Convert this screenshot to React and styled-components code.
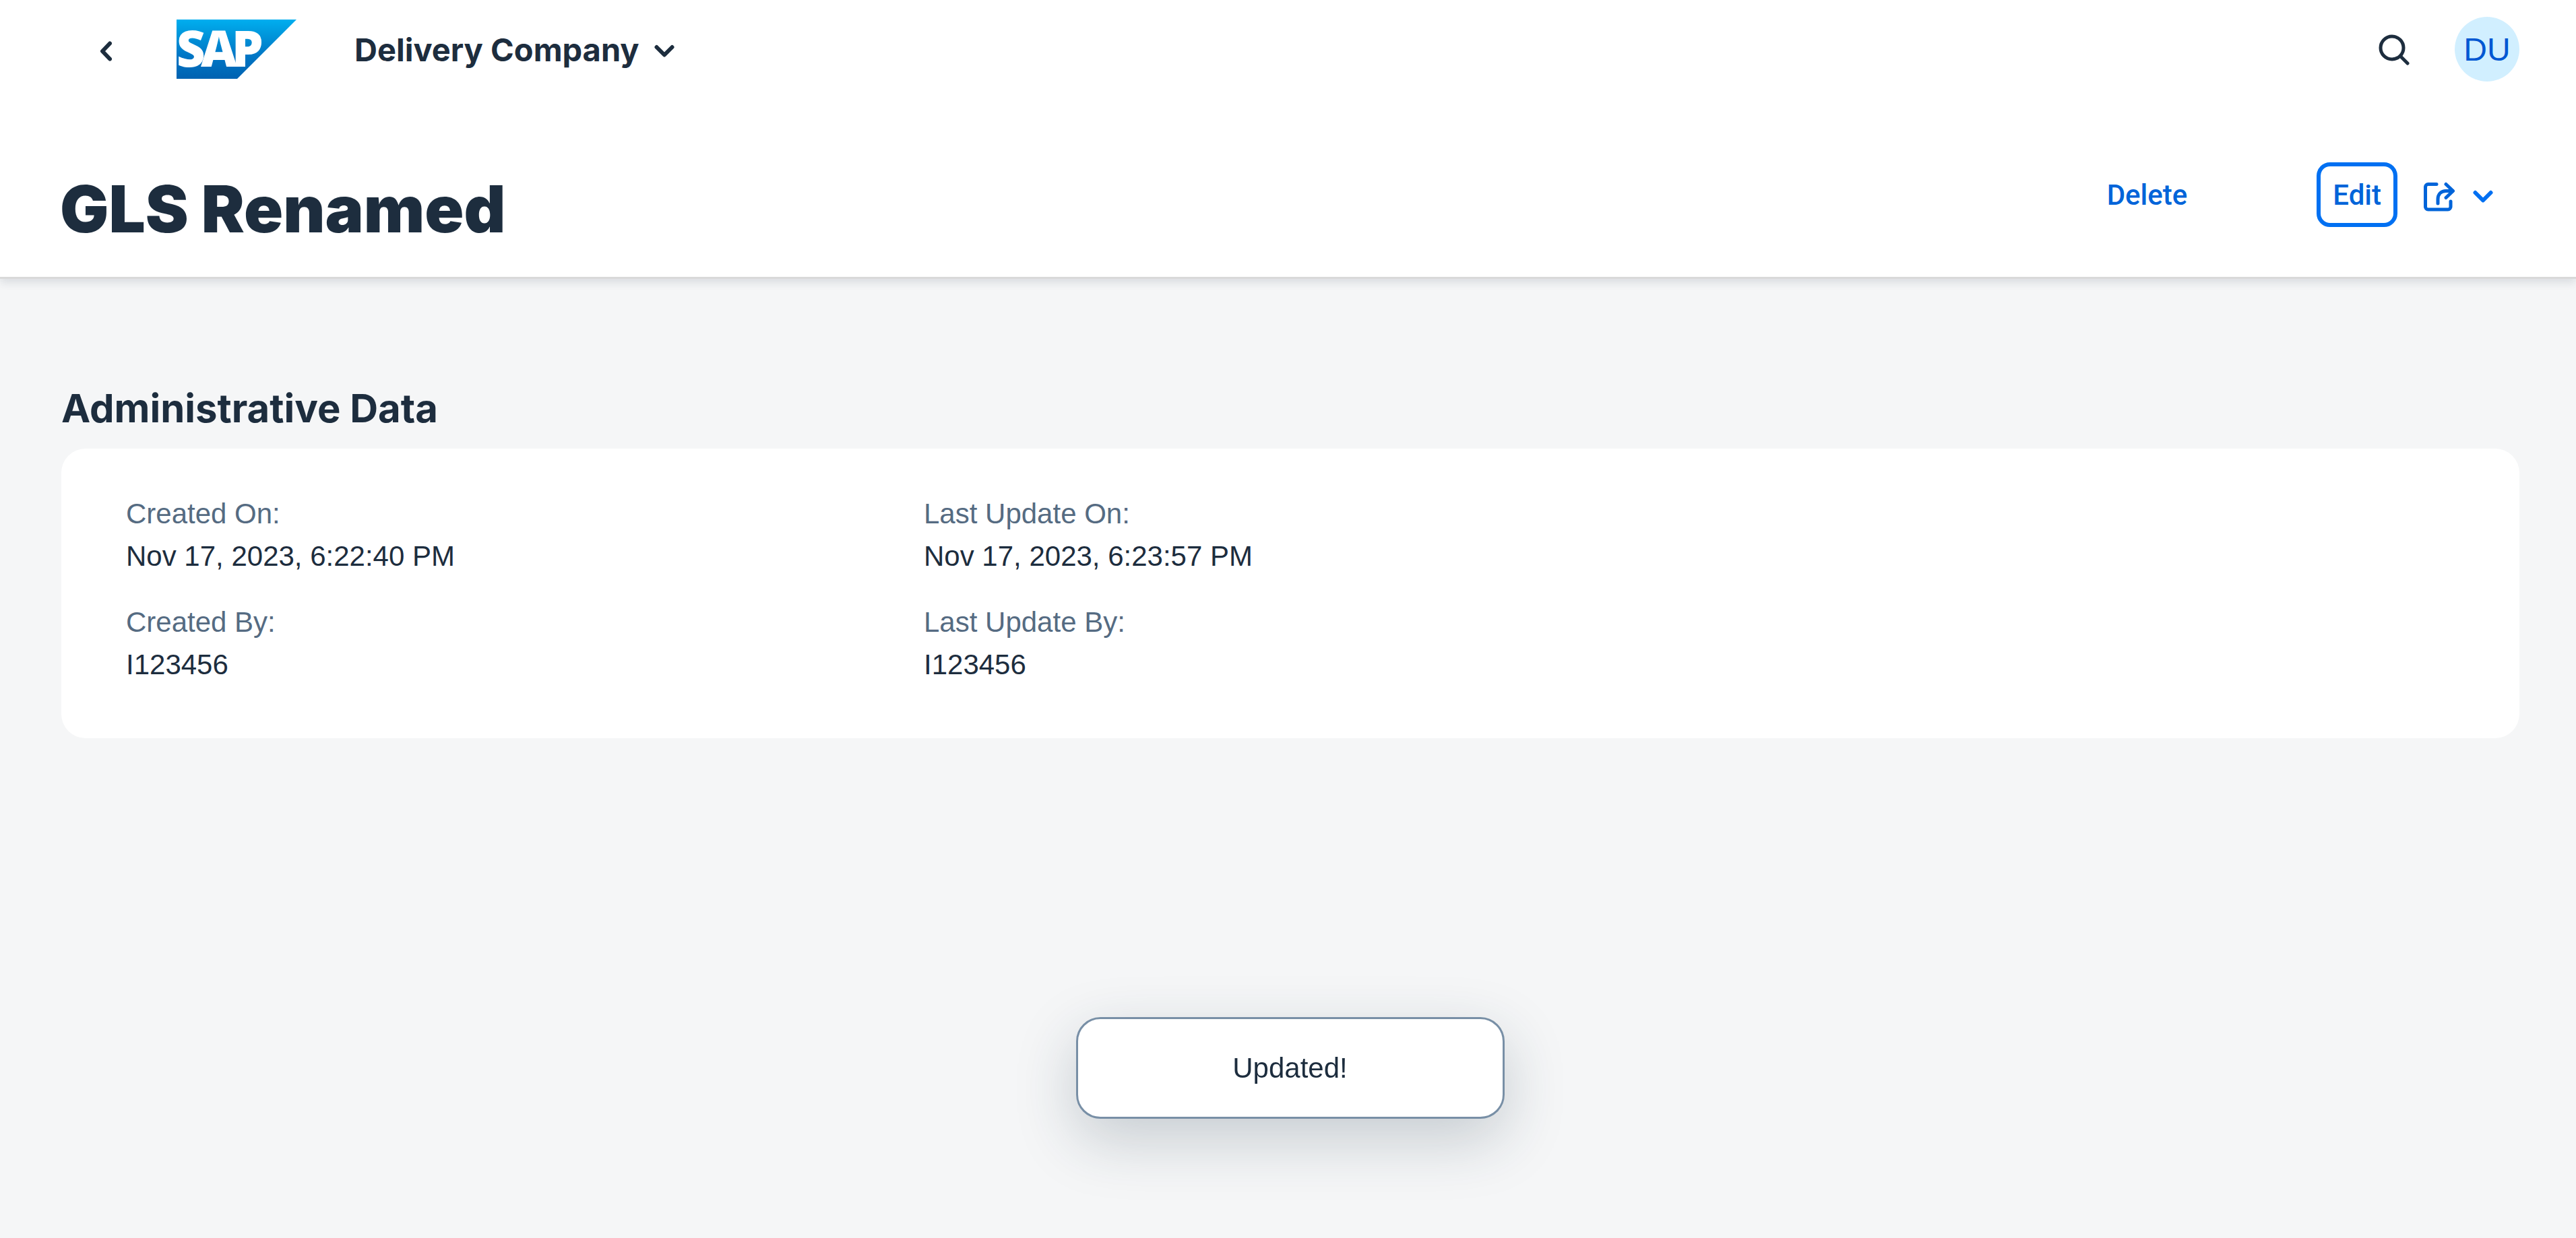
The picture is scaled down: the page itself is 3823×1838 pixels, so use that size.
import React from "react";
import styled, { createGlobalStyle } from "styled-components";

const ink = "#1d2d3e";
const link = "#0064d9";
const heading = `Inter, "Liberation Sans", sans-serif`;

const GlobalStyle = createGlobalStyle`
  * { box-sizing: border-box; }
  body {
    margin: 0;
    background: #f5f6f7;
    color: ${ink};
    font-family: "Liberation Sans", Arial, sans-serif;
    font-size: 42px;
    line-height: 63px;
  }
  h1, h2, dl, dd { margin: 0; }
`;

const Page = styled.div`
  min-height: 100vh;
`;

const ShellBar = styled.header`
  position: relative;
  z-index: 1;
  display: flex;
  align-items: center;
  height: 146px;
  padding: 0 84px 0 124px;
  background: #fff;
`;

const PlainButton = styled.button`
  display: flex;
  align-items: center;
  justify-content: center;
  padding: 0;
  border: 0;
  background: none;
  color: ${(p) => p.$color || ink};
  font: inherit;
  cursor: pointer;
  svg { display: block; }
`;

const BackButton = styled(PlainButton)`
  width: 66px;
  height: 96px;
`;

const HomeLink = styled.a`
  display: block;
  margin-left: 72px;
  svg { display: block; overflow: visible; }
`;

const AppTitle = styled(PlainButton)`
  gap: 22px;
  margin-left: 86px;
  font-family: ${heading};
  font-size: 47px;
  font-weight: 700;
`;

const ShellTools = styled.div`
  display: flex;
  align-items: center;
  gap: 42px;
  margin-left: auto;
`;

const SearchButton = styled(PlainButton)`
  width: 96px;
  height: 96px;
`;

const Avatar = styled(PlainButton)`
  width: 96px;
  height: 96px;
  border-radius: 50%;
  background: #d1efff;
  color: #0057d2;
  font-size: 48px;
`;

const ObjectHeader = styled.section`
  display: flex;
  align-items: flex-start;
  justify-content: space-between;
  padding: 95px 84px 32px 89px;
  border-bottom: 3px solid #d9d9d9;
  background: #fff;
  box-shadow: 0 6px 12px rgba(34, 53, 72, 0.12);
`;

const Title = styled.h1`
  font-family: ${heading};
  font-size: 96px;
  font-weight: 900;
  line-height: 138px;
`;

const Actions = styled.div`
  display: flex;
  align-items: center;
  gap: 24px;
`;

const ActionButton = styled(PlainButton)`
  height: 96px;
  padding: 0 18px;
  border: 6px solid ${(p) => (p.$focused ? "#0070f2" : "transparent")};
  border-radius: 20px;
  color: ${link};
  font-family: Roboto, "Liberation Sans", sans-serif;
  font-weight: 500;
  margin-right: ${(p) => (p.$spaced ? "144px" : "0")};
`;

const ShareButton = styled(PlainButton)`
  gap: 26px;
  height: 96px;
  padding: 0 39px 0 14px;
`;

const Content = styled.main`
  padding: 156px 84px 96px 91px;
`;

const SectionTitle = styled.h2`
  margin-bottom: 24px;
  font-family: ${heading};
  font-size: 58px;
  font-weight: 700;
  line-height: 72px;
`;

const Card = styled.section`
  padding: 65px 96px 78px;
  border-radius: 36px;
  background: #fff;
`;

const FieldGrid = styled.dl`
  display: grid;
  grid-template-columns: repeat(3, 1fr);
  gap: 35px 96px;
`;

const Field = styled.div`
  grid-column: ${(p) => p.$column};
`;

const Label = styled.dt`
  color: #556b82;
`;

const Toast = styled.div`
  position: fixed;
  bottom: 177px;
  left: calc(50% + 3px);
  width: 636px;
  padding: 41px 48px;
  border: 3px solid #788fa6;
  border-radius: 36px;
  background: #fff;
  box-shadow: 0 30px 90px rgba(34, 53, 72, 0.22);
  text-align: center;
  transform: translateX(-50%);
`;

const BackIcon = () => (
  <svg width="18" height="36" viewBox="0 0 18 36" fill="none" stroke="currentColor" strokeWidth="6" strokeLinecap="round" strokeLinejoin="round" aria-hidden="true">
    <path d="M15 9.500 4 21 15 32.500" />
  </svg>
);

const ChevronIcon = ({ color }) => (
  <svg width="30" height="24" viewBox="0 0 30 24" fill="none" stroke={color || "currentColor"} strokeWidth="6" strokeLinecap="round" strokeLinejoin="round" aria-hidden="true">
    <path d="M3.500 9 15 20.500 26.500 9" />
  </svg>
);

const SearchIcon = () => (
  <svg width="48" height="48" viewBox="0 0 48 48" fill="none" stroke="currentColor" strokeWidth="5" strokeLinecap="round" aria-hidden="true">
    <circle cx="21" cy="22" r="17" />
    <path d="M34 35 44 45" />
  </svg>
);

const ShareIcon = () => (
  <svg width="48" height="52" viewBox="0 -8 48 52" fill="none" stroke={link} strokeWidth="5" strokeLinecap="round" strokeLinejoin="round" aria-hidden="true">
    <path d="M20 2.500H7.500a4 4 0 0 0-4 4V36a4 4 0 0 0 4 4H37a4 4 0 0 0 4-4v-8" />
    <path d="M22 31v-6c0-8 5-12.500 12-12.500h10" />
    <path d="M34 2.500 44.500 12.500 34 22.500" />
  </svg>
);

const SapLogo = () => (
  <svg width="178" height="88" viewBox="0 0 178 88" role="img" aria-label="SAP">
    <defs>
      <linearGradient id="logoFill" x1="0" y1="0" x2="0" y2="1">
        <stop offset="0" stopColor="#00aeef" />
        <stop offset="0.250" stopColor="#0097dc" />
        <stop offset="0.600" stopColor="#0077c6" />
        <stop offset="1" stopColor="#0062b1" />
      </linearGradient>
    </defs>
    <path d="M0 0H178L90 88H0Z" fill="url(#logoFill)" />
    <text x="0 36 82" y="70" fill="#fff" fontFamily="Noto Sans, sans-serif" fontWeight="900" fontSize="74">SAP</text>
  </svg>
);

const fields = [
  { column: 1, label: "Created On:", value: "Nov 17, 2023, 6:22:40 PM" },
  { column: 2, label: "Last Update On:", value: "Nov 17, 2023, 6:23:57 PM" },
  { column: 1, label: "Created By:", value: "I123456" },
  { column: 2, label: "Last Update By:", value: "I123456" },
];

export default function App() {
  return (
    <Page>
      <GlobalStyle />
      <ShellBar>
        <BackButton type="button" aria-label="Back"><BackIcon /></BackButton>
        <HomeLink href="#" aria-label="Home"><SapLogo /></HomeLink>
        <AppTitle type="button">Delivery Company<ChevronIcon /></AppTitle>
        <ShellTools>
          <SearchButton type="button" aria-label="Search"><SearchIcon /></SearchButton>
          <Avatar type="button">DU</Avatar>
        </ShellTools>
      </ShellBar>
      <ObjectHeader>
        <Title>GLS Renamed</Title>
        <Actions>
          <ActionButton type="button" $spaced>Delete</ActionButton>
          <ActionButton type="button" $focused>Edit</ActionButton>
          <ShareButton type="button" aria-label="Share">
            <ShareIcon />
            <ChevronIcon color="#0070f2" />
          </ShareButton>
        </Actions>
      </ObjectHeader>
      <Content>
        <SectionTitle>Administrative Data</SectionTitle>
        <Card>
          <FieldGrid>
            {fields.map((f) => (
              <Field key={f.label} $column={f.column}>
                <Label>{f.label}</Label>
                <dd>{f.value}</dd>
              </Field>
            ))}
          </FieldGrid>
        </Card>
      </Content>
      <Toast role="status">Updated!</Toast>
    </Page>
  );
}
